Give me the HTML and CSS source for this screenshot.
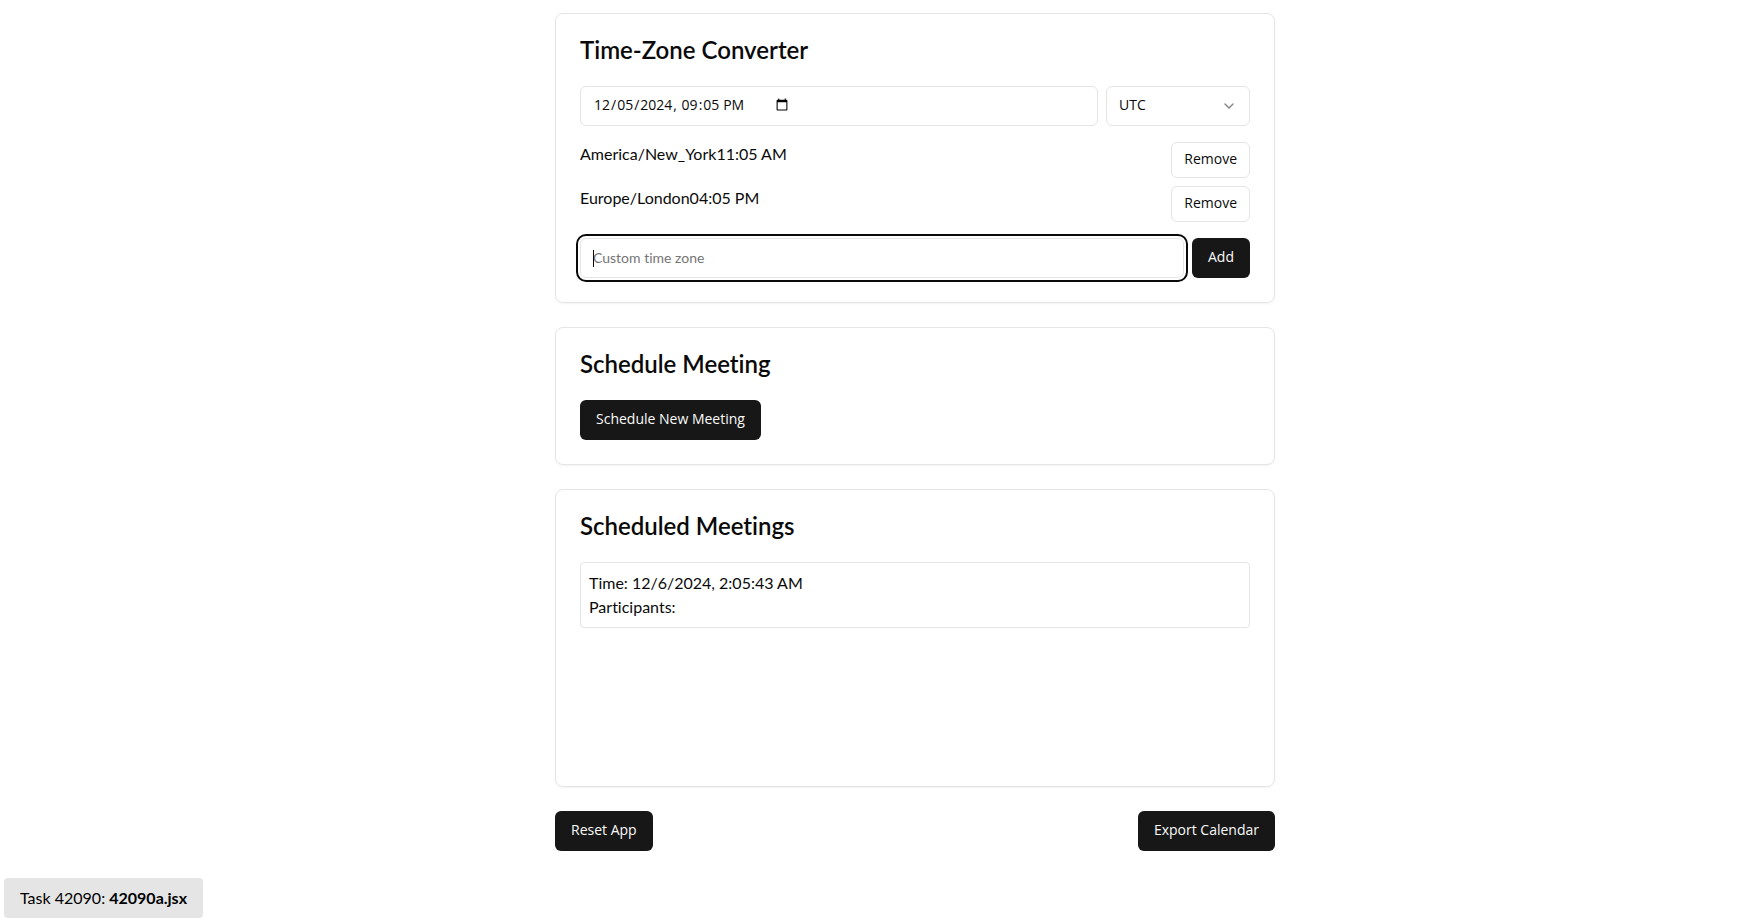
FILE: index.html
```html
<!DOCTYPE html>
<html lang="en">
<head>
<meta charset="utf-8">
<meta name="viewport" content="width=device-width, initial-scale=1">
<title>Time-Zone Converter</title>
<link rel="stylesheet" href="styles.css">
</head>
<body>
<main class="app">
  <section class="card">
    <h2 class="card-title">Time-Zone Converter</h2>
    <div class="card-body">
      <div class="row">
        <input class="field" type="datetime-local" value="2024-12-05T21:05" aria-label="Date and time">
        <div class="select-wrap">
          <select class="field" aria-label="Time zone">
            <option>UTC</option>
            <option>America/New_York</option>
            <option>Europe/London</option>
          </select>
          <svg class="chevron" viewBox="0 0 24 24" aria-hidden="true"><path d="m6 9 6 6 6-6"/></svg>
        </div>
      </div>
      <ul class="zones">
        <li class="zone"><span>America/New_York11:05 AM</span><button class="btn btn-outline" type="button">Remove</button></li>
        <li class="zone"><span>Europe/London04:05 PM</span><button class="btn btn-outline" type="button">Remove</button></li>
      </ul>
      <div class="row">
        <div class="caret-wrap">
          <input class="field field-focused" type="text" placeholder="Custom time zone" aria-label="Custom time zone" autofocus>
        </div>
        <button class="btn" type="button">Add</button>
      </div>
    </div>
  </section>

  <section class="card">
    <h2 class="card-title">Schedule Meeting</h2>
    <button class="btn" type="button">Schedule New Meeting</button>
  </section>

  <section class="card">
    <h2 class="card-title">Scheduled Meetings</h2>
    <div class="meetings">
      <div class="meeting">
        <p>Time: 12/6/2024, 2:05:43 AM</p>
        <p>Participants:</p>
      </div>
    </div>
  </section>

  <div class="actions">
    <button class="btn" type="button">Reset App</button>
    <button class="btn" type="button">Export Calendar</button>
  </div>
</main>
<div class="task-badge">Task 42090: <strong>42090a.jsx</strong></div>
</body>
</html>
```
FILE: styles.css
```css
*, *::before, *::after {
  box-sizing: border-box;
}

body {
  margin: 0;
  padding: 13px 0 0 83px;
  background: #fff;
  color: #0a0a0a;
  font: 400 16px/24px Lato, "Open Sans", sans-serif;
  font-variant-ligatures: none;
}

h2, p, ul {
  margin: 0;
  padding: 0;
}

.app {
  display: flex;
  flex-direction: column;
  gap: 24px;
  max-width: 720px;
  margin: 0 auto;
}

.card {
  padding: 24px;
  border: 1px solid #e5e5e5;
  border-radius: 8px;
  box-shadow: 0 1px 2px rgb(0 0 0 / 5%);
}

.card-title {
  margin-bottom: 24px;
  font-size: 24px;
  font-weight: 600;
  line-height: 24px;
}

.card-body {
  display: flex;
  flex-direction: column;
  gap: 16px;
}

.row {
  display: flex;
  gap: 8px;
}

.field {
  display: flex;
  flex: 1;
  width: 100%;
  min-width: 0;
  height: 40px;
  padding: 8px 12px 10px;
  border: 1px solid #e5e5e5;
  border-radius: 6px;
  background: #fff;
  color: #0a0a0a;
  font: 400 14px/20px "Open Sans", sans-serif;
}

.field::placeholder {
  color: #757575;
  font-family: Lato, "Open Sans", sans-serif;
  font-variant-ligatures: none;
}

.field-focused {
  outline: 2px solid #0a0a0a;
  outline-offset: 2px;
  caret-color: transparent;
}

.caret-wrap {
  position: relative;
  flex: 1;
}

.caret-wrap::before {
  content: "";
  position: absolute;
  top: 12px;
  left: 13px;
  width: 1px;
  height: 17px;
  background: #0a0a0a;
}

.select-wrap {
  position: relative;
  width: 144px;
}

.select-wrap .field {
  appearance: none;
}

.chevron {
  position: absolute;
  top: 12px;
  right: 13px;
  width: 16px;
  height: 16px;
  fill: none;
  stroke: #0a0a0a;
  stroke-width: 2;
  stroke-linecap: round;
  stroke-linejoin: round;
  opacity: 0.5;
  pointer-events: none;
}

.zones {
  display: flex;
  flex-direction: column;
  gap: 8px;
  list-style: none;
}

.zone {
  display: flex;
  justify-content: space-between;
}

.btn {
  height: 40px;
  padding: 0 16px 2px;
  border: 0;
  border-radius: 6px;
  background: #171717;
  color: #fafafa;
  font: 400 14px/20px "Open Sans", sans-serif;
  white-space: nowrap;
}

.btn-outline {
  height: 36px;
  padding: 0 12px 2px;
  border: 1px solid #e5e5e5;
  background: #fff;
  color: #0a0a0a;
  font-weight: 500;
}

.meetings {
  min-height: 200px;
}

.meeting {
  padding: 8px;
  border: 1px solid #e5e5e5;
  border-radius: 4px;
}

.actions {
  display: flex;
  justify-content: space-between;
}

.task-badge {
  position: fixed;
  bottom: 3px;
  left: 4px;
  padding: 8px 16px;
  border-radius: 4px;
  background: #e5e5e5;
  color: #000;
}
```
